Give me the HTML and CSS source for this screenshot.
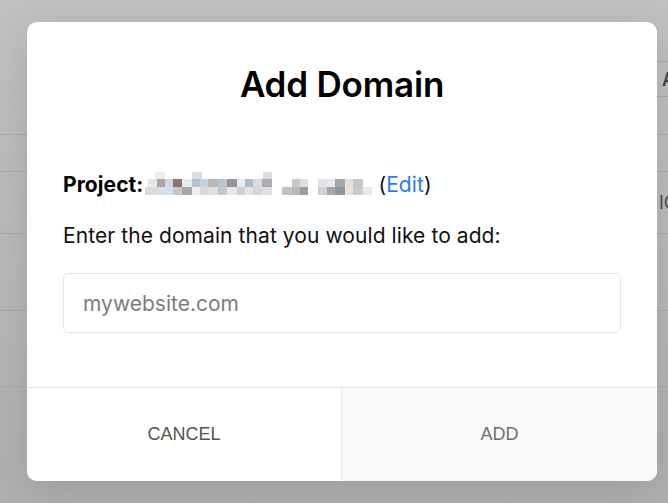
FILE: index.html
```html
<!DOCTYPE html>
<html lang="en">
<head>
<meta charset="utf-8">
<title>Add Domain</title>
<link rel="stylesheet" href="styles.css">
</head>
<body>
<div class="page">
  <div class="head-row"><span class="head-cell">A</span></div>
  <div class="row r1"></div>
  <div class="row r2"></div>
  <div class="row r3"><span class="row-text">IC</span></div>
  <div class="row r4"></div>
  <div class="row r5"></div>
</div>

<div class="modal" role="dialog" aria-labelledby="dlg-title">
  <div class="modal-body">
    <h2 class="modal-title" id="dlg-title">Add Domain</h2>
    <p class="project-line"><strong>Project:</strong><svg class="mosaic" width="229" height="26" viewBox="0 0 229 26" aria-hidden="true">
      <rect x="12" y="2" width="10" height="7" fill="#ededed"/>
      <rect x="49" y="2" width="10" height="7" fill="#dedede"/>
      <rect x="120" y="2" width="9" height="7" fill="#dcdcdc"/>
      <rect x="5" y="9" width="9" height="8" fill="#e6e6e8"/>
      <rect x="14" y="9" width="8" height="8" fill="#aaa6aa"/>
      <rect x="22" y="9" width="8" height="8" fill="#d4d8dc"/>
      <rect x="30" y="9" width="9" height="8" fill="#8c7470"/>
      <rect x="39" y="9" width="10" height="8" fill="#e8ecf0"/>
      <rect x="49" y="9" width="8" height="8" fill="#b4c0d4"/>
      <rect x="57" y="9" width="8" height="8" fill="#c4d4e4"/>
      <rect x="65" y="9" width="10" height="8" fill="#b8b8bc"/>
      <rect x="75" y="9" width="9" height="8" fill="#b8c4d0"/>
      <rect x="84" y="9" width="10" height="8" fill="#98949c"/>
      <rect x="94" y="9" width="8" height="8" fill="#e8ecf0"/>
      <rect x="102" y="9" width="8" height="8" fill="#b0bcc8"/>
      <rect x="110" y="9" width="9" height="8" fill="#d4dce8"/>
      <rect x="119" y="9" width="10" height="8" fill="#acacb0"/>
      <rect x="149" y="9" width="8" height="8" fill="#c8c8cc"/>
      <rect x="157" y="9" width="8" height="8" fill="#e0ded8"/>
      <rect x="175" y="9" width="9" height="8" fill="#dce4ec"/>
      <rect x="184" y="9" width="8" height="8" fill="#e8e8ec"/>
      <rect x="192" y="9" width="10" height="8" fill="#a8a4a8"/>
      <rect x="202" y="9" width="8" height="8" fill="#e4e0e0"/>
      <rect x="210" y="9" width="10" height="8" fill="#c8c8cc"/>
      <rect x="2" y="17" width="12" height="8" fill="#e2dad2"/>
      <rect x="14" y="17" width="8" height="8" fill="#d8e0e8"/>
      <rect x="22" y="17" width="8" height="8" fill="#d0e0ec"/>
      <rect x="30" y="17" width="9" height="8" fill="#c4c8cc"/>
      <rect x="39" y="17" width="10" height="8" fill="#a8a8ac"/>
      <rect x="49" y="17" width="8" height="8" fill="#f0ece8"/>
      <rect x="57" y="17" width="8" height="8" fill="#d8d8d4"/>
      <rect x="65" y="17" width="10" height="8" fill="#e0e0e0"/>
      <rect x="75" y="17" width="9" height="8" fill="#c8c8cc"/>
      <rect x="84" y="17" width="10" height="8" fill="#e8e8e8"/>
      <rect x="94" y="17" width="8" height="8" fill="#d0d0d0"/>
      <rect x="102" y="17" width="8" height="8" fill="#e4e4e4"/>
      <rect x="110" y="17" width="9" height="8" fill="#d8d8d8"/>
      <rect x="119" y="17" width="10" height="8" fill="#e0e0e0"/>
      <rect x="139" y="17" width="10" height="8" fill="#c4c4c4"/>
      <rect x="149" y="17" width="8" height="8" fill="#b8b8b8"/>
      <rect x="157" y="17" width="8" height="8" fill="#a09c9c"/>
      <rect x="175" y="17" width="9" height="8" fill="#d0d0d0"/>
      <rect x="184" y="17" width="8" height="8" fill="#a8a8a8"/>
      <rect x="192" y="17" width="10" height="8" fill="#8c98a4"/>
      <rect x="202" y="17" width="8" height="8" fill="#e8e4dc"/>
      <rect x="210" y="17" width="10" height="8" fill="#c8ccd0"/>
      <rect x="220" y="17" width="9" height="8" fill="#e8e8e8"/>
    </svg> (<a class="edit-link" href="#">Edit</a>)</p>
    <p class="prompt">Enter the domain that you would like to add:</p>
    <input class="domain-input" type="text" placeholder="mywebsite.com">
  </div>
  <div class="modal-footer">
    <button class="btn btn-cancel" type="button">CANCEL</button>
    <button class="btn btn-add" type="button">ADD</button>
  </div>
</div>
</body>
</html>
```
FILE: styles.css
```css
* {
  box-sizing: border-box;
}

html, body {
  margin: 0;
  height: 100%;
}

body {
  background: linear-gradient(180deg, #c1c1c1 0%, #b9b9b9 50%, #afafaf 100%);
  font-family: Inter, "Noto Sans", sans-serif;
  overflow: hidden;
  position: relative;
}

/* underlying page (dimmed) */
.page {
  padding-top: 61px;
  color: #4a4a4a;
  font-family: Inter, sans-serif;
}

.head-row {
  margin-left: 560px;
  height: 36px;
  border-top: 1px solid #ababab;
  border-bottom: 1px solid #ababab;
  padding-left: 102px;
  display: flex;
  align-items: center;
  font-size: 18px;
  font-weight: 600;
  color: #444;
}

.row {
  border-bottom: 1px solid #ababab;
  display: flex;
  align-items: center;
  white-space: nowrap;
  overflow: hidden;
}

.r1 { height: 38px; }
.r2 { height: 37px; }
.r3 { height: 62px; }
.r4 { height: 77px; }
.r5 { height: 76px; }

.row-text {
  padding-left: 659px;
  font-size: 18px;
  color: #4a4a4a;
}

/* modal */
.modal {
  position: absolute;
  left: 27px;
  top: 22px;
  width: 630px;
  height: 459px;
  background: #fff;
  border-radius: 10px;
  box-shadow: 0 8px 40px rgba(0, 0, 0, 0.12);
  display: flex;
  flex-direction: column;
  overflow: hidden;
}

.modal-body {
  flex: 1;
  padding: 40px 36px 0;
}

.modal-title {
  margin: 0;
  text-align: center;
  font-size: 35px;
  line-height: 45px;
  font-weight: 600;
  color: #000;
  letter-spacing: -0.2px;
}

.project-line,
.prompt {
  margin: 0;
  font-size: 21px;
  line-height: 30px;
  color: #111;
  letter-spacing: 0.08px;
}

.project-line {
  margin-top: 63px;
}

.project-line strong {
  font-weight: 700;
  color: #000;
}

.mosaic {
  vertical-align: -4px;
}

.edit-link {
  color: #2b7de9;
  text-decoration: none;
}

.prompt {
  margin-top: 21px;
}

.domain-input {
  display: block;
  margin-top: 22px;
  width: 100%;
  height: 60px;
  border: 1px solid #e6e6e6;
  border-radius: 6px;
  padding: 0 19px;
  font-family: Inter, sans-serif;
  font-size: 21px;
  color: #333;
  background: #fff;
  outline: none;
}

.domain-input::placeholder {
  color: #7d7d7d;
}

.modal-footer {
  height: 94px;
  border-top: 1px solid #e8e8e8;
  display: grid;
  grid-template-columns: 314px 1fr;
}

.btn {
  border: 0;
  margin: 0;
  font-family: "Liberation Sans", Arial, sans-serif;
  font-size: 18px;
  background: #fff;
  color: #555;
  cursor: pointer;
  padding: 0;
}

.btn-add {
  background: #f9f9f9;
  border-left: 1px solid #ebebeb;
  color: #6f6f6f;
}
```
